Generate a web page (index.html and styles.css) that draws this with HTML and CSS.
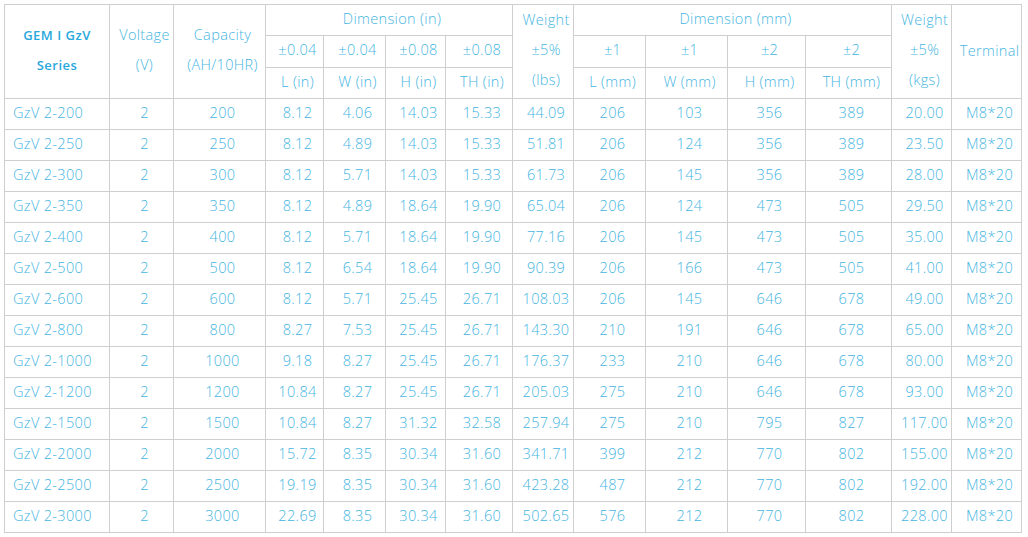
FILE: index.html
```html
<!DOCTYPE html>
<html>
<head>
<meta charset="utf-8">
<link rel="stylesheet" href="styles.css">
</head>
<body>
<table class="spec">
<colgroup>
<col class="c1"><col class="c2"><col class="c3"><col class="c4"><col class="c5"><col class="c6"><col class="c7"><col class="c8"><col class="c9"><col class="c10"><col class="c11"><col class="c12"><col class="c13"><col class="c14">
</colgroup>
<thead>
<tr>
<th rowspan="3" class="series">GEM I GzV<br>Series</th>
<th rowspan="3" class="multi">Voltage<br>(V)</th>
<th rowspan="3" class="multi">Capacity<br>(AH/10HR)</th>
<th colspan="4">Dimension (in)</th>
<th rowspan="3" class="multi">Weight<br>±5%<br>(lbs)</th>
<th colspan="4">Dimension (mm)</th>
<th rowspan="3" class="multi">Weight<br>±5%<br>(kgs)</th>
<th rowspan="3" class="term">Terminal</th>
</tr>
<tr>
<th>±0.04</th><th>±0.04</th><th>±0.08</th><th>±0.08</th>
<th>±1</th><th>±1</th><th>±2</th><th>±2</th>
</tr>
<tr>
<th>L (in)</th><th>W (in)</th><th>H (in)</th><th>TH (in)</th>
<th>L (mm)</th><th>W (mm)</th><th>H (mm)</th><th>TH (mm)</th>
</tr>
</thead>
<tbody>
<tr><td class="name">GzV 2-200</td><td>2</td><td>200</td><td>8.12</td><td>4.06</td><td>14.03</td><td>15.33</td><td>44.09</td><td>206</td><td>103</td><td>356</td><td>389</td><td>20.00</td><td>M8*20</td></tr>
<tr><td class="name">GzV 2-250</td><td>2</td><td>250</td><td>8.12</td><td>4.89</td><td>14.03</td><td>15.33</td><td>51.81</td><td>206</td><td>124</td><td>356</td><td>389</td><td>23.50</td><td>M8*20</td></tr>
<tr><td class="name">GzV 2-300</td><td>2</td><td>300</td><td>8.12</td><td>5.71</td><td>14.03</td><td>15.33</td><td>61.73</td><td>206</td><td>145</td><td>356</td><td>389</td><td>28.00</td><td>M8*20</td></tr>
<tr><td class="name">GzV 2-350</td><td>2</td><td>350</td><td>8.12</td><td>4.89</td><td>18.64</td><td>19.90</td><td>65.04</td><td>206</td><td>124</td><td>473</td><td>505</td><td>29.50</td><td>M8*20</td></tr>
<tr><td class="name">GzV 2-400</td><td>2</td><td>400</td><td>8.12</td><td>5.71</td><td>18.64</td><td>19.90</td><td>77.16</td><td>206</td><td>145</td><td>473</td><td>505</td><td>35.00</td><td>M8*20</td></tr>
<tr><td class="name">GzV 2-500</td><td>2</td><td>500</td><td>8.12</td><td>6.54</td><td>18.64</td><td>19.90</td><td>90.39</td><td>206</td><td>166</td><td>473</td><td>505</td><td>41.00</td><td>M8*20</td></tr>
<tr><td class="name">GzV 2-600</td><td>2</td><td>600</td><td>8.12</td><td>5.71</td><td>25.45</td><td>26.71</td><td>108.03</td><td>206</td><td>145</td><td>646</td><td>678</td><td>49.00</td><td>M8*20</td></tr>
<tr><td class="name">GzV 2-800</td><td>2</td><td>800</td><td>8.27</td><td>7.53</td><td>25.45</td><td>26.71</td><td>143.30</td><td>210</td><td>191</td><td>646</td><td>678</td><td>65.00</td><td>M8*20</td></tr>
<tr><td class="name">GzV 2-1000</td><td>2</td><td>1000</td><td>9.18</td><td>8.27</td><td>25.45</td><td>26.71</td><td>176.37</td><td>233</td><td>210</td><td>646</td><td>678</td><td>80.00</td><td>M8*20</td></tr>
<tr><td class="name">GzV 2-1200</td><td>2</td><td>1200</td><td>10.84</td><td>8.27</td><td>25.45</td><td>26.71</td><td>205.03</td><td>275</td><td>210</td><td>646</td><td>678</td><td>93.00</td><td>M8*20</td></tr>
<tr><td class="name">GzV 2-1500</td><td>2</td><td>1500</td><td>10.84</td><td>8.27</td><td>31.32</td><td>32.58</td><td>257.94</td><td>275</td><td>210</td><td>795</td><td>827</td><td>117.00</td><td>M8*20</td></tr>
<tr><td class="name">GzV 2-2000</td><td>2</td><td>2000</td><td>15.72</td><td>8.35</td><td>30.34</td><td>31.60</td><td>341.71</td><td>399</td><td>212</td><td>770</td><td>802</td><td>155.00</td><td>M8*20</td></tr>
<tr><td class="name">GzV 2-2500</td><td>2</td><td>2500</td><td>19.19</td><td>8.35</td><td>30.34</td><td>31.60</td><td>423.28</td><td>487</td><td>212</td><td>770</td><td>802</td><td>192.00</td><td>M8*20</td></tr>
<tr><td class="name">GzV 2-3000</td><td>2</td><td>3000</td><td>22.69</td><td>8.35</td><td>30.34</td><td>31.60</td><td>502.65</td><td>576</td><td>212</td><td>770</td><td>802</td><td>228.00</td><td>M8*20</td></tr>
</tbody>
</table>
</body>
</html>
```
FILE: styles.css
```css
html, body {
  margin: 0;
  padding: 0;
  background: #ffffff;
}
body {
  padding: 4px 0 0 4px;
  font-family: "Open Sans", "Liberation Sans", sans-serif;
  color: #45b5df;
}
.spec {
  border-collapse: collapse;
  table-layout: fixed;
  width: 1018px;
  font-size: 14.5px;
  font-weight: 300;
  letter-spacing: 0.35px;
}
.c1 { width: 105px; }
.c2 { width: 64px; }
.c3 { width: 92px; }
.c4 { width: 58px; }
.c5 { width: 62px; }
.c6 { width: 60px; }
.c7 { width: 67px; }
.c8 { width: 61px; }
.c9 { width: 72px; }
.c10 { width: 82px; }
.c11 { width: 78px; }
.c12 { width: 86px; }
.c13 { width: 60px; }
.c14 { width: 70px; }
.spec th, .spec td {
  border: 1px solid #cfcfcf;
  height: 28px;
  padding: 0 0 2px 6px;
  text-align: center;
  vertical-align: middle;
  font-weight: 300;
  white-space: nowrap;
  overflow: visible;
  line-height: 28px;
}
.spec th.multi, .spec th.series {
  line-height: 30px;
  padding-bottom: 3px;
}
.spec th.series {
  font-weight: 600;
  color: #28a8dd;
  font-size: 13px;
  letter-spacing: 0.5px;
  padding-left: 0;
}
.spec td.name {
  text-align: left;
  padding-left: 8px;
}
```
